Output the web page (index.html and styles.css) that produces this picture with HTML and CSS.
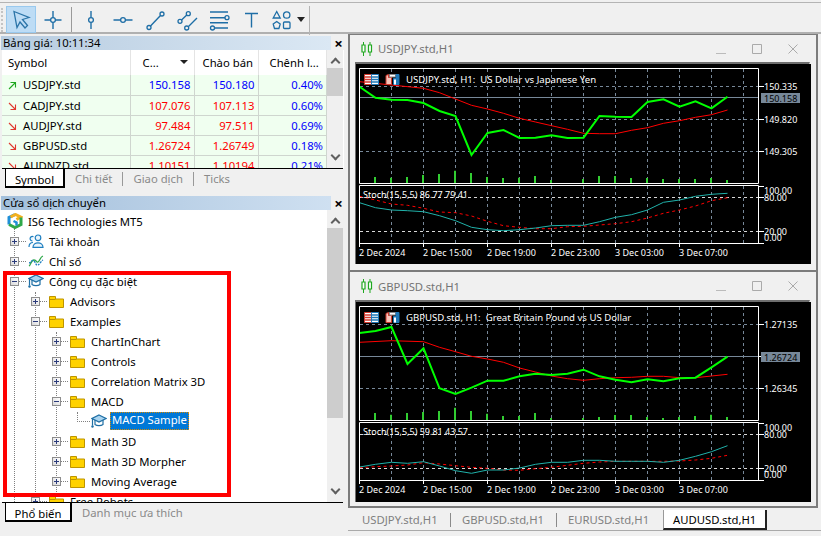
FILE: index.html
```html
<!DOCTYPE html>
<html lang="vi">
<head>
  <meta charset="UTF-8">
  <title>MetaTrader 5</title>
  <link rel="stylesheet" href="styles.css">
</head>
<body>

<svg class="defs" width="0" height="0">
  <symbol id="folder" viewBox="0 0 15 12">
    <path d="M.5 .5h6v2.500h8v8.500h-14z" fill="#ffd200" stroke="#bd9400"/>
    <path d="M1 3.500h5.500" stroke="#bd9400"/>
  </symbol>
  <symbol id="hat" viewBox="0 0 16 14">
    <path d="M4 6v4.500c2 1.500 6 1.500 8 0v-4.500" fill="#fff" stroke="#1f6fa5" stroke-width="1.200"/>
    <path d="M8 1l7 3.500-7 3.500-7-3.500z" fill="#a9d4f0" stroke="#1f6fa5" stroke-width="1.200"/>
    <path d="M1.500 5v6.500" stroke="#1f6fa5" stroke-width="1.200"/>
    <circle cx="1.500" cy="12.500" r="1.200" fill="#1f6fa5"/>
  </symbol>
  <symbol id="candle" viewBox="0 0 12 14">
    <path d="M2.500 0v14M9 0v14" stroke="#1fa81f"/>
    <path d="M1 3h3v7h-3zM7.500 3h3v7h-3z" fill="#fff" stroke="#1fa81f" stroke-width="1.200"/>
  </symbol>
  <symbol id="arrow-down" viewBox="0 0 9 9">
    <path d="M1 1l6.500 6.500M7.500 2.500v5h-5" fill="none" stroke="#e0392f" stroke-width="1.100"/>
  </symbol>
  <symbol id="arrow-up" viewBox="0 0 9 9">
    <path d="M1 8l6.500-6.500M2.500 1.500h5v5" fill="none" stroke="#1fa81f" stroke-width="1.100"/>
  </symbol>
  <symbol id="legend-a" viewBox="0 0 15 11">
    <path d="M.5 .5h7v10h-7z" fill="#fff" stroke="#d23a2e"/>
    <path d="M7.500 .5h7v10h-7z" fill="#fff" stroke="#1f78b8"/>
    <path d="M1 3h6M1 5.500h6M1 8h6" stroke="#d23a2e" stroke-width="1.300"/>
    <path d="M8 3h6M8 5.500h6M8 8h6" stroke="#1f78b8" stroke-width="1.300"/>
  </symbol>
  <symbol id="legend-b" viewBox="0 0 15 11">
    <path d="M1 1.500l2.500-1v3h3v7h-5.500z" fill="#f7c4bb" stroke="#d23a2e"/>
    <path d="M4.500 .5h6v2.500h-6z" fill="#fff" stroke="#888"/>
    <path d="M8.500 4.500h2.500v-4h3v10h-5.500z" fill="#1f78b8" stroke="#1f78b8"/>
    <path d="M9 5.500h2v5h-2z" fill="#fff"/>
  </symbol>
</svg>

<div class="toolbar">
  <span class="grip"></span>
  <span class="tool tool-on">
    <svg width="24" height="24" viewBox="0 0 24 24"><path d="M5 3.500l15 6-6.500 2 5 6-2.500 2.500-5-6-3 5.500z" fill="none" stroke="#2b74a8" stroke-width="1.300"/></svg>
  </span>
  <span class="tool">
    <svg width="24" height="24" viewBox="0 0 24 24"><path d="M12 3v6.500M12 14.500v6.500M3.500 12h6M14.500 12h6" stroke="#1e6ea6" stroke-width="1.400"/><circle cx="12" cy="12" r="2.400" fill="none" stroke="#1e6ea6" stroke-width="1.300"/></svg>
  </span>
  <span class="sep"></span>
  <span class="tool">
    <svg width="24" height="24" viewBox="0 0 24 24"><path d="M12 3v6.500M12 14.500v6.500" stroke="#1e6ea6" stroke-width="1.400"/><circle cx="12" cy="12" r="2.400" fill="none" stroke="#1e6ea6" stroke-width="1.300"/></svg>
  </span>
  <span class="tool">
    <svg width="24" height="24" viewBox="0 0 24 24"><path d="M2.500 12h7M14.500 12h7" stroke="#1e6ea6" stroke-width="1.400"/><circle cx="12" cy="12" r="2.400" fill="none" stroke="#1e6ea6" stroke-width="1.300"/></svg>
  </span>
  <span class="tool">
    <svg width="24" height="24" viewBox="0 0 24 24"><path d="M7.500 18l10-10.500" stroke="#1e6ea6" stroke-width="1.400"/><circle cx="6" cy="19.500" r="2" fill="none" stroke="#1e6ea6" stroke-width="1.300"/><circle cx="19" cy="6" r="2" fill="none" stroke="#1e6ea6" stroke-width="1.300"/></svg>
  </span>
  <span class="tool">
    <svg width="24" height="24" viewBox="0 0 24 24"><path d="M6.500 12l5.300-5M13.500 18.500l8.500-8.500" stroke="#1e6ea6" stroke-width="1.400"/><circle cx="5" cy="13.300" r="2" fill="none" stroke="#1e6ea6" stroke-width="1.300"/><circle cx="13.300" cy="5.700" r="2" fill="none" stroke="#1e6ea6" stroke-width="1.300"/><circle cx="11.700" cy="20" r="2" fill="none" stroke="#1e6ea6" stroke-width="1.300"/></svg>
  </span>
  <span class="tool">
    <svg width="24" height="24" viewBox="0 0 24 24"><path d="M3 4h18M3 9.700h15M3 14.700h18M8 20h13" stroke="#1e6ea6" stroke-width="1.400"/><circle cx="20" cy="9.700" r="2" fill="none" stroke="#1e6ea6" stroke-width="1.300"/><circle cx="5.500" cy="20" r="2" fill="none" stroke="#1e6ea6" stroke-width="1.300"/></svg>
  </span>
  <span class="tool">
    <svg width="24" height="24" viewBox="0 0 24 24"><path d="M6 5.500h13M12.500 5.500v14" stroke="#1e6ea6" stroke-width="1.400"/></svg>
  </span>
  <span class="tool">
    <svg width="24" height="24" viewBox="0 0 24 24" fill="none" stroke="#1e6ea6" stroke-width="1.300"><path d="M5.700 3.500l3.500 6.500h-7z"/><circle cx="15.700" cy="7" r="3.200"/><path d="M5.700 13.500l3.500 2.600-1.300 4.400h-4.400l-1.300-4.400z"/><rect x="12.500" y="14" width="6.500" height="6.500" rx="1"/></svg>
  </span>
  <span class="drop"></span>
  <span class="sep sep-last"></span>
</div>

<div class="main">
  <div class="left">

    <div class="panel-title watch-title"><span>Bảng giá: 10:11:34</span></div>
    <div class="panel-close">×</div>
    <div class="watch">
      <div class="watch-body">
        <table class="quotes">
          <thead>
            <tr>
              <th class="c1">Symbol</th>
              <th class="c2">C...<i class="sort"></i></th>
              <th class="c3">Chào bán</th>
              <th class="c4">Chênh l...</th>
            </tr>
          </thead>
          <tbody>
            <tr>
              <td class="sym"><svg class="dir"><use href="#arrow-up"/></svg>USDJPY.std</td>
              <td class="num up">150.158</td><td class="num up">150.180</td><td class="num up">0.40%</td>
            </tr>
            <tr>
              <td class="sym"><svg class="dir"><use href="#arrow-down"/></svg>CADJPY.std</td>
              <td class="num down">107.076</td><td class="num down">107.113</td><td class="num up">0.60%</td>
            </tr>
            <tr>
              <td class="sym"><svg class="dir"><use href="#arrow-down"/></svg>AUDJPY.std</td>
              <td class="num down">97.484</td><td class="num down">97.511</td><td class="num up">0.69%</td>
            </tr>
            <tr>
              <td class="sym"><svg class="dir"><use href="#arrow-down"/></svg>GBPUSD.std</td>
              <td class="num down">1.26724</td><td class="num down">1.26749</td><td class="num up">0.18%</td>
            </tr>
            <tr>
              <td class="sym"><svg class="dir"><use href="#arrow-down"/></svg>AUDNZD.std</td>
              <td class="num down">1.10151</td><td class="num down">1.10194</td><td class="num up">0.21%</td>
            </tr>
          </tbody>
        </table>
      </div>
      <div class="scroll">
        <span class="chev chev-up"></span>
        <span class="thumb thumb-watch"></span>
        <span class="chev chev-down"></span>
      </div>
    </div>
    <div class="tabs-left">
      <span class="ltab ltab-on ltab-sym">Symbol</span>
      <span class="ltab">Chi tiết</span>
      <span class="ltab-sep"></span>
      <span class="ltab">Giao dịch</span>
      <span class="ltab-sep"></span>
      <span class="ltab">Ticks</span>
    </div>

    <div class="panel-title nav-title"><span>Cửa sổ dịch chuyển</span></div>
    <div class="panel-close close-nav">×</div>
    <div class="nav">
      <div class="tree">
        <span class="guide guide-a"></span>
        <span class="guide guide-b"></span>
        <span class="guide guide-c"></span>
        <span class="guide guide-d"></span>
        <span class="guide-h"></span>

        <div class="node root">
          <svg class="ico" viewBox="0 0 16 16" fill="none" stroke-width="3">
            <path d="M2 11.500v-7l6-3" stroke="#1f8fd8"/>
            <path d="M3.500 4l5-2.500 5 2.500-4 2.500" stroke="#f2b01e"/>
            <path d="M14 4.500v7l-6 3-6-3" stroke="#2fa84a"/>
            <path d="M6.500 8l3 1.500v3" stroke="#1f8fd8" stroke-width="2.500"/>
          </svg>
          <span class="lbl">IS6 Technologies MT5</span>
        </div>
        <div class="node l1">
          <span class="exp"></span><span class="dots"></span>
          <svg class="ico" viewBox="0 0 16 14" fill="#eaf5fc" stroke="#1f7fc0" stroke-width="1.200">
            <path d="M1 13c0-3 1.500-4.500 4-4.500M4.500 7a2.300 2.300 0 1 1 1-4.300"/>
            <circle cx="10" cy="3.800" r="2.800"/>
            <path d="M5 13.300c0-6 10-6 10 0z"/>
          </svg>
          <span class="lbl">Tài khoản</span>
        </div>
        <div class="node l1">
          <span class="exp"></span><span class="dots"></span>
          <svg class="ico" viewBox="0 0 16 14" fill="none">
            <path d="M1 12c2-1 2-6 5-6s2 3 4 2 2-5 5-6" stroke="#2fa84a" stroke-width="1.300"/>
            <path d="M1 9c2 0 3-4 5-2s2 5 4 4 3-4 5-5" stroke="#1f7fc0" stroke-width="1.300" stroke-dasharray="2 1"/>
          </svg>
          <span class="lbl">Chỉ số</span>
        </div>
        <div class="node l1">
          <span class="exp open"></span><span class="dots"></span>
          <svg class="ico"><use href="#hat"/></svg>
          <span class="lbl">Công cụ đặc biệt</span>
        </div>
        <div class="node l2">
          <span class="exp"></span><span class="dots"></span>
          <svg class="ico"><use href="#folder" width="15" height="12" y="2"/></svg>
          <span class="lbl">Advisors</span>
        </div>
        <div class="node l2">
          <span class="exp open"></span><span class="dots"></span>
          <svg class="ico"><use href="#folder" width="15" height="12" y="2"/></svg>
          <span class="lbl">Examples</span>
        </div>
        <div class="node l3">
          <span class="exp"></span><span class="dots"></span>
          <svg class="ico"><use href="#folder" width="15" height="12" y="2"/></svg>
          <span class="lbl">ChartInChart</span>
        </div>
        <div class="node l3">
          <span class="exp"></span><span class="dots"></span>
          <svg class="ico"><use href="#folder" width="15" height="12" y="2"/></svg>
          <span class="lbl">Controls</span>
        </div>
        <div class="node l3">
          <span class="exp"></span><span class="dots"></span>
          <svg class="ico"><use href="#folder" width="15" height="12" y="2"/></svg>
          <span class="lbl">Correlation Matrix 3D</span>
        </div>
        <div class="node l3">
          <span class="exp open"></span><span class="dots"></span>
          <svg class="ico"><use href="#folder" width="15" height="12" y="2"/></svg>
          <span class="lbl">MACD</span>
        </div>
        <div class="node l4">
          <svg class="ico"><use href="#hat"/></svg>
          <span class="lbl selected">MACD Sample</span>
        </div>
        <div class="node l3">
          <span class="exp"></span><span class="dots"></span>
          <svg class="ico"><use href="#folder" width="15" height="12" y="2"/></svg>
          <span class="lbl">Math 3D</span>
        </div>
        <div class="node l3">
          <span class="exp"></span><span class="dots"></span>
          <svg class="ico"><use href="#folder" width="15" height="12" y="2"/></svg>
          <span class="lbl">Math 3D Morpher</span>
        </div>
        <div class="node l3">
          <span class="exp"></span><span class="dots"></span>
          <svg class="ico"><use href="#folder" width="15" height="12" y="2"/></svg>
          <span class="lbl">Moving Average</span>
        </div>
        <div class="node l2">
          <span class="exp"></span><span class="dots"></span>
          <svg class="ico"><use href="#folder" width="15" height="12" y="2"/></svg>
          <span class="lbl">Free Robots</span>
        </div>

        <div class="red-box"></div>
      </div>
      <div class="scroll scroll-nav">
        <span class="chev chev-up"></span>
        <span class="thumb thumb-nav"></span>
        <span class="chev chev-down"></span>
      </div>
    </div>
    <div class="tabs-left tabs-nav">
      <span class="ltab ltab-on ltab-pop">Phổ biến</span>
      <span class="ltab">Danh mục ưa thích</span>
    </div>
  </div>

  <div class="mdi">
    <div class="win win-first">
      <div class="win-title">
        <svg class="win-ico"><use href="#candle"/></svg>
        <span class="win-name">USDJPY.std,H1</span>
        <span class="win-btns">
          <svg width="12" height="12" viewBox="0 0 12 12"><path d="M1 10.500h10" stroke="#bbb"/></svg>
          <svg width="12" height="12" viewBox="0 0 12 12"><path d="M1.500 1.500h9v9h-9z" fill="none" stroke="#aaa"/></svg>
          <svg width="12" height="12" viewBox="0 0 12 12"><path d="M1.500 1.500l9 9M10.500 1.500l-9 9" stroke="#aaa"/></svg>
        </span>
      </div>
      <div class="chart-wrap">
        <svg class="chart" viewBox="0 0 455 200" width="455" height="200">
          <path class="grid" d="M35.500 5V119M67.500 5V119M99.500 5V119M131.500 5V119M163.500 5V119M195.500 5V119M227.500 5V119M259.500 5V119M291.500 5V119M323.500 5V119M355.500 5V119M387.500 5V119M4 22.500H402M4 55.500H402M4 87.500H402"/>
          <path class="grid" d="M35.500 122V179M67.500 122V179M99.500 122V179M131.500 122V179M163.500 122V179M195.500 122V179M227.500 122V179M259.500 122V179M291.500 122V179M323.500 122V179M355.500 122V179M387.500 122V179"/>
          <path class="grid-w" d="M4 133.500H402M4 167.500H402"/>
          <path class="price" d="M4 33.500H402"/>
          <path class="vol" d="M19 119V113M35 119V113.700M51 119V113M67 119V111M83 119V110M99 119V106.700M115 119V109M131 119V113M147 119V114M163 119V113.700M179 119V112M195 119V116M227 119V115M243 119V112M259 119V112M275 119V114M291 119V114M307 119V115M323 119V115M339 119V115M355 119V114M371 119V116"/>
          <polyline class="ma" points="3.500,17.700 35.500,21 67.500,24.300 83.500,28.700 99.500,35 115.500,41.300 131.500,45 147.500,49.300 163.500,54.300 179.500,58 195.500,61.700 211.500,65.300 227.500,69.300 243.500,69.700 259.500,69.700 275.500,66.300 291.500,63.700 307.500,59.300 323.500,56.700 339.500,53.300 355.500,50.700 371.500,46"/>
          <polyline class="line" points="3.500,22.700 19.500,33.700 35.500,35.700 51.500,36 67.500,39 83.500,47 99.500,52 115.500,91 131.500,69 147.500,66 163.500,74 179.500,73.700 195.500,71.300 211.500,74 227.500,73.700 243.500,52 259.500,52.700 275.500,53 291.500,38 307.500,35.300 323.500,42.700 339.500,37.300 355.500,44.300 371.500,32.700"/>
          <polyline class="sig" points="3.500,132.300 19.500,136 35.500,140 51.500,141.300 67.500,144.300 83.500,148 99.500,148.700 115.500,152 131.500,157.300 147.500,161.700 163.500,163.300 179.500,164.700 195.500,164.700 211.500,162.700 227.500,162.300 243.500,161 259.500,159.700 275.500,157.700 291.500,154 307.500,149.300 323.500,146 339.500,142 355.500,136.700 371.500,133.700"/>
          <polyline class="main-k" points="3.500,138.700 19.500,143.700 35.500,146 51.500,146.700 67.500,147.700 83.500,151.700 99.500,156.700 115.500,163.300 131.500,165.700 147.500,166.700 163.500,165.700 179.500,164 195.500,161.700 211.500,161.300 227.500,161.300 243.500,157.700 259.500,153.300 275.500,150.700 291.500,146 307.500,138.300 323.500,136 339.500,132.300 355.500,130.300 371.500,129.300"/>
          <path class="frame" d="M3.500 4.500H402.500V119.500H3.500ZM3.500 121.500H402.500V179.500H3.500Z"/>
          <path class="frame" d="M402 22.500H408M402 55.500H408M402 87.500H408M402 122.500H408M402 133.500H408M402 167.500H408M402 179.500H408M3.500 179V183M67.500 179V183M131.500 179V183M195.500 179V183M259.500 179V183M323.500 179V183"/>
          <use href="#legend-a" x="8" y="10" width="15" height="11"/>
          <use href="#legend-b" x="29" y="10" width="15" height="11"/>
          <text class="legend" x="50" y="19">USDJPY.std, H1:  US Dollar vs Japanese Yen</text>
          <text x="7" y="134">Stoch(15,5,5) 86.77 79.41</text>
          <text x="408" y="26">150.335</text>
          <rect class="tag" x="405" y="29" width="39" height="10"/>
          <text class="tag-text" x="408" y="37.500">150.158</text>
          <text x="408" y="58.500">149.820</text>
          <text x="408" y="91">149.305</text>
          <text x="408" y="130">100.00</text>
          <text x="408" y="137">80.00</text>
          <text x="408" y="171">20.00</text>
          <text x="408" y="177">0.00</text>
          <text x="3" y="191.500">2 Dec 2024</text>
          <text x="67" y="191.500">2 Dec 15:00</text>
          <text x="131" y="191.500">2 Dec 19:00</text>
          <text x="195" y="191.500">2 Dec 23:00</text>
          <text x="259" y="191.500">3 Dec 03:00</text>
          <text x="323" y="191.500">3 Dec 07:00</text>
        </svg>
      </div>
    </div>

    <div class="win win-second">
      <div class="win-title">
        <svg class="win-ico"><use href="#candle"/></svg>
        <span class="win-name">GBPUSD.std,H1</span>
        <span class="win-btns">
          <svg width="12" height="12" viewBox="0 0 12 12"><path d="M1 10.500h10" stroke="#bbb"/></svg>
          <svg width="12" height="12" viewBox="0 0 12 12"><path d="M1.500 1.500h9v9h-9z" fill="none" stroke="#aaa"/></svg>
          <svg width="12" height="12" viewBox="0 0 12 12"><path d="M1.500 1.500l9 9M10.500 1.500l-9 9" stroke="#aaa"/></svg>
        </span>
      </div>
      <div class="chart-wrap">
        <svg class="chart" viewBox="0 0 455 200" width="455" height="200">
          <path class="grid" d="M35.500 5V118M67.500 5V118M99.500 5V118M131.500 5V118M163.500 5V118M195.500 5V118M227.500 5V118M259.500 5V118M291.500 5V118M323.500 5V118M355.500 5V118M387.500 5V118M4 22.500H402M4 86.500H402"/>
          <path class="grid" d="M35.500 121V178M67.500 121V178M99.500 121V178M131.500 121V178M163.500 121V178M195.500 121V178M227.500 121V178M259.500 121V178M291.500 121V178M323.500 121V178M355.500 121V178M387.500 121V178"/>
          <path class="grid-w" d="M4 132.500H402M4 166.500H402"/>
          <path class="price" d="M4 54.500H402"/>
          <path class="vol" d="M19 118V111M35 118V112.700M51 118V111M67 118V110M83 118V109M99 118V105.700M115 118V109M131 118V111.700M147 118V114M163 118V114M179 118V111M195 118V116M227 118V116M243 118V115M259 118V113M275 118V113M291 118V115M307 118V116M323 118V115M339 118V114M355 118V112.700M371 118V115"/>
          <polyline class="ma" points="3.500,40.300 35.500,38.700 67.500,39.700 83.500,45.300 99.500,49.700 115.500,54.300 131.500,57 147.500,60.300 163.500,66 179.500,70 195.500,74 211.500,76.700 227.500,78.300 243.500,76.700 259.500,75.700 275.500,75.300 291.500,74.300 307.500,74.300 323.500,75.700 339.500,75.700 355.500,74 371.500,72.300"/>
          <polyline class="line" points="3.500,31 19.500,29 35.500,25 51.500,62 67.500,46.300 83.500,86.300 99.500,92 115.500,85.700 131.500,78.700 147.500,78.700 163.500,74.300 179.500,71.700 195.500,73 211.500,71.700 227.500,67.700 243.500,74.300 259.500,77.700 275.500,80.300 291.500,77.300 307.500,79.300 323.500,76.300 339.500,75.700 355.500,65.300 371.500,54.700"/>
          <polyline class="sig" points="3.500,165.700 19.500,164.700 35.500,164 51.500,163 67.500,160.700 83.500,162 99.500,163.700 115.500,165.300 131.500,166.300 147.500,168 163.500,168.300 179.500,166.700 195.500,165.300 211.500,163.300 227.500,161.300 243.500,160 259.500,159.300 275.500,159.300 291.500,159.300 307.500,159.300 323.500,159 339.500,158 355.500,156.300 371.500,153.300"/>
          <polyline class="main-k" points="3.500,165 19.500,162.300 35.500,160.300 51.500,161.300 67.500,159.700 83.500,164 99.500,168.700 115.500,171.300 131.500,168 147.500,168 163.500,166 179.500,162.300 195.500,160.300 211.500,160.300 227.500,158.300 243.500,158.300 259.500,159.300 275.500,159.300 291.500,159.300 307.500,160.300 323.500,158.300 339.500,154.300 355.500,149.700 371.500,143.700"/>
          <path class="frame" d="M3.500 4.500H402.500V118.500H3.500ZM3.500 120.500H402.500V178.500H3.500Z"/>
          <path class="frame" d="M402 22.500H408M402 54.500H408M402 86.500H408M402 121.500H408M402 132.500H408M402 166.500H408M402 178.500H408M3.500 178V182M67.500 178V182M131.500 178V182M195.500 178V182M259.500 178V182M323.500 178V182"/>
          <use href="#legend-a" x="8" y="10" width="15" height="11"/>
          <use href="#legend-b" x="29" y="10" width="15" height="11"/>
          <text class="legend" x="50" y="19">GBPUSD.std, H1:  Great Britain Pound vs US Dollar</text>
          <text x="7" y="133">Stoch(15,5,5) 59.81 43.57</text>
          <text x="408" y="26">1.27135</text>
          <rect class="tag" x="405" y="50" width="39" height="10"/>
          <text class="tag-text" x="408" y="58.500">1.26724</text>
          <text x="408" y="90">1.26345</text>
          <text x="408" y="129">100.00</text>
          <text x="408" y="136">80.00</text>
          <text x="408" y="170">20.00</text>
          <text x="408" y="176">0.00</text>
          <text x="3" y="190.500">2 Dec 2024</text>
          <text x="67" y="190.500">2 Dec 15:00</text>
          <text x="131" y="190.500">2 Dec 19:00</text>
          <text x="195" y="190.500">2 Dec 23:00</text>
          <text x="259" y="190.500">3 Dec 03:00</text>
          <text x="323" y="190.500">3 Dec 07:00</text>
        </svg>
      </div>
    </div>

    <div class="win-tabs">
      <span class="wtab">USDJPY.std,H1</span>
      <span class="wtab">GBPUSD.std,H1</span>
      <span class="wtab wtab-last">EURUSD.std,H1</span>
      <span class="wtab wtab-on">AUDUSD.std,H1</span>
    </div>
  </div>
</div>

</body>
</html>
```

FILE: styles.css
```css
* { box-sizing: border-box; }

html, body { margin: 0; height: 100%; }

body {
  width: 821px;
  height: 536px;
  overflow: hidden;
  background: #f0f0f0;
  font-family: "Noto Sans", sans-serif;
  font-size: 11.3px;
  color: #000;
}

.defs { position: absolute; }

/* toolbar */
.toolbar {
  height: 32px;
  margin-top: 2px;
  padding: 3px 0 0 5px;
  display: flex;
  align-items: flex-start;
  border-top: 1px solid #b4b4b4;
  border-bottom: 2px solid #b0b0b0;
  position: relative;
}

.grip {
  position: absolute;
  left: 1px;
  top: 5px;
  height: 24px;
  border-left: 2px dotted #c4c4c4;
}

.tool {
  width: 32px;
  height: 27px;
  display: flex;
  align-items: center;
  justify-content: center;
}

.tool-on {
  width: 30px;
  margin: 0 1px;
  background: #bddcf5;
  border: 1px solid #99c9ee;
}

.sep {
  width: 1px;
  height: 25px;
  margin: 1px 3px 0 2px;
  background: #9a9a9a;
}

.sep-last { margin-left: 4px; margin-top: 0; height: 29px; background: #b4b4b4; }

.drop {
  width: 0;
  height: 0;
  margin: 11px 0 0 -2px;
  border-left: 4px solid transparent;
  border-right: 4px solid transparent;
  border-top: 5px solid #222;
}

/* layout */
.main { display: flex; height: 502px; }

.left {
  width: 345px;
  position: relative;
  padding-top: 2px;
}

.panel-title {
  height: 14px;
  width: 330px;
  margin-left: 1px;
  padding-left: 2px;
  line-height: 13px;
  background: linear-gradient(to right, #b7cce0, #dbe8f4);
}

.nav-title {
  margin-top: 4px;
  background: linear-gradient(to right, #a3bfdb, #cfe0f1);
}

.panel-close {
  position: absolute;
  left: 332px;
  top: 0;
  width: 13px;
  height: 17px;
  font-size: 15px;
  font-weight: bold;
  line-height: 18px;
  text-align: center;
}

.close-nav { top: 160px; }

/* market watch */
.watch {
  height: 118px;
  margin: 0 1px 0 2px;
  display: flex;
  overflow: hidden;
  background: #fff;
}

.watch-body { width: 325px; height: 118px; overflow: hidden; }

.quotes {
  width: 325px;
  table-layout: fixed;
  border-collapse: collapse;
}

.quotes th {
  height: 25px;
  padding: 0;
  font-weight: normal;
  text-align: left;
  border-right: 1px solid #e4e4e4;
  background: #fff;
  position: relative;
}

.c1 { width: 128px; padding-left: 6px !important; }
.c2 { width: 64px; padding-left: 12px !important; }
.c3 { width: 64px; padding-left: 8px !important; }
.c4 { padding-left: 11px !important; }

.sort {
  position: absolute;
  left: 49px;
  top: 10px;
  border-left: 4px solid transparent;
  border-right: 4px solid transparent;
  border-top: 4px solid #222;
}

.quotes td {
  height: 20px;
  padding: 0 3px 0 0;
  background: #f0fff0;
  border-right: 1px solid #cfd6cf;
  border-bottom: 1px solid #cfd6cf;
  white-space: nowrap;
}

.sym { padding-left: 6px !important; }

.dir {
  width: 9px;
  height: 9px;
  margin-right: 6px;
  vertical-align: -1px;
}

.num { text-align: right; }
.up { color: #0000ff; }
.down { color: #ff0000; }

/* scrollbars */
.scroll {
  width: 16px;
  background: #f0f0f0;
  position: relative;
}

.scroll-nav { height: 292px; }

.thumb {
  position: absolute;
  left: 0;
  width: 16px;
  background: #cdcdcd;
}

.thumb-watch { top: 18px; height: 28px; }
.thumb-nav { top: 18px; height: 190px; }

.chev {
  position: absolute;
  left: 5px;
  width: 7px;
  height: 7px;
  border-left: 2px solid #606060;
  border-top: 2px solid #606060;
}

.chev-up { top: 9px; transform: rotate(45deg); }
.chev-down { bottom: 9px; transform: rotate(225deg); }

/* bottom tabs of the panels */
.tabs-left {
  height: 24px;
  margin-left: 2px;
  width: 341px;
  padding-left: 3px;
  display: flex;
  align-items: flex-start;
  border-top: 1px solid #000;
  color: #8a8a8a;
}

.tabs-nav { height: 22px; }

.ltab { padding: 0 10px; line-height: 19px; white-space: nowrap; }
.ltab-sep { width: 1px; height: 14px; margin-top: 3px; background: #999; }

.ltab-on {
  height: 20px;
  margin-top: -1px;
  padding: 1px 0 0;
  color: #000;
  background: #fff;
  text-align: center;
  border: 1px solid #000;
  border-right-width: 2px;
  border-bottom-width: 2px;
}

.ltab-sym { width: 60px; }
.ltab-pop { width: 67px; }

/* navigator */
.nav {
  height: 292px;
  margin: 0 1px 0 0;
  display: flex;
  overflow: hidden;
}

.tree {
  width: 327px;
  height: 292px;
  padding-top: 1px;
  background: #fff;
  position: relative;
  overflow: hidden;
}

.node {
  height: 20px;
  display: flex;
  align-items: center;
  position: relative;
}

.root { padding-left: 7px; }
.l1 { padding-left: 10px; }
.l2 { padding-left: 31px; }
.l3 { padding-left: 52px; }
.l4 { padding-left: 91px; }

.exp {
  width: 9px;
  height: 9px;
  flex: none;
  border: 1px solid #8d8d8d;
  background: linear-gradient(45deg, #d8d8d8, #fff);
  position: relative;
}

.exp::before {
  content: "";
  position: absolute;
  left: 1px;
  top: 3px;
  width: 5px;
  height: 1px;
  background: #2a3a7a;
}

.exp::after {
  content: "";
  position: absolute;
  left: 3px;
  top: 1px;
  width: 1px;
  height: 5px;
  background: #2a3a7a;
}

.exp.open::after { display: none; }

.dots {
  width: 7px;
  height: 1px;
  margin: 0 2px 0 0;
  flex: none;
  border-top: 1px dotted #808080;
}

.ico {
  width: 16px;
  height: 14px;
  flex: none;
  margin-right: 5px;
}

.root .ico { height: 16px; }

.lbl { white-space: nowrap; }

.selected {
  margin-left: -2px;
  padding: 0 2px;
  height: 18px;
  line-height: 16px;
  color: #fff;
  background: #0078d7;
  outline: 1px dotted #d98a00;
  outline-offset: -1px;
}

.guide {
  position: absolute;
  border-left: 1px dotted #808080;
}

.guide-a { left: 14px; top: 18px; height: 274px; }
.guide-b { left: 35px; top: 82px; height: 210px; }
.guide-c { left: 56px; top: 122px; height: 160px; }
.guide-d { left: 77px; top: 202px; height: 10px; }

.guide-h {
  position: absolute;
  left: 77px;
  top: 211px;
  width: 13px;
  border-top: 1px dotted #808080;
}

.red-box {
  position: absolute;
  left: 3px;
  top: 61px;
  width: 228px;
  height: 226px;
  border: 4px solid #ff0000;
}

/* chart windows */
.mdi {
  width: 476px;
  padding-left: 3px;
}

.win {
  width: 470px;
  border: 2px solid #7c7c7c;
  border-top: 0;
  background: #f0f0f0;
}

.win-first {
  height: 239px;
  margin-top: -1px;
  border-top: 2px solid #7c7c7c;
}

.win-second { height: 236px; }

.win-title {
  height: 28px;
  padding: 0 17px 0 11px;
  display: flex;
  align-items: center;
  color: #757575;
}

.win-first .win-title { height: 27px; }

.win-ico { width: 12px; height: 14px; margin-right: 5px; }

.win-btns {
  margin-left: auto;
  display: flex;
  gap: 24px;
}

.chart-wrap {
  margin: 0 6px 0 5px;
  border-top: 2px solid #6e6e6e;
  border-left: 1px solid #6e6e6e;
  border-right: 1px solid #e2e2e2;
}

.chart {
  display: block;
  background: #000;
  font-family: "Noto Sans", sans-serif;
  font-size: 9px;
}

.chart text { fill: #fff; white-space: pre; }
.chart .legend { font-size: 9.6px; }
.chart .tag-text { fill: #000; }
.tag { fill: #778899; }

.grid { stroke: #778899; stroke-dasharray: 3 3; fill: none; }
.grid-w { stroke: #d8d8d8; stroke-dasharray: 3 3; fill: none; }
.price { stroke: #778899; fill: none; }
.frame { stroke: #fff; fill: none; }
.vol { stroke: #32cd32; stroke-width: 2; fill: none; }
.ma { stroke: #ff0000; fill: none; }
.line { stroke: #00ff00; stroke-width: 2; fill: none; }
.sig { stroke: #ff0000; stroke-dasharray: 3 3; fill: none; }
.main-k { stroke: #20b2aa; fill: none; }

/* tabs under the charts */
.win-tabs {
  height: 20px;
  margin-top: 2px;
  display: flex;
  color: #808080;
  box-shadow: 0 1px 0 #aaa;
}

.wtab {
  height: 20px;
  width: 106px;
  padding-left: 11px;
  line-height: 20px;
  position: relative;
  white-space: nowrap;
}

.wtab::after {
  content: "";
  position: absolute;
  right: 0;
  top: 3px;
  width: 1px;
  height: 14px;
  background: #8a8a8a;
}

.wtab:first-child { width: 103px; padding-left: 14px; }
.wtab-last::after, .wtab-on::after { display: none; }

.wtab-on {
  width: 104px;
  padding-left: 9px;
  color: #000;
  background: #fff;
  border-right: 2px solid #222;
  border-bottom: 2px solid #222;
  border-left: 1px solid #999;
}
```
